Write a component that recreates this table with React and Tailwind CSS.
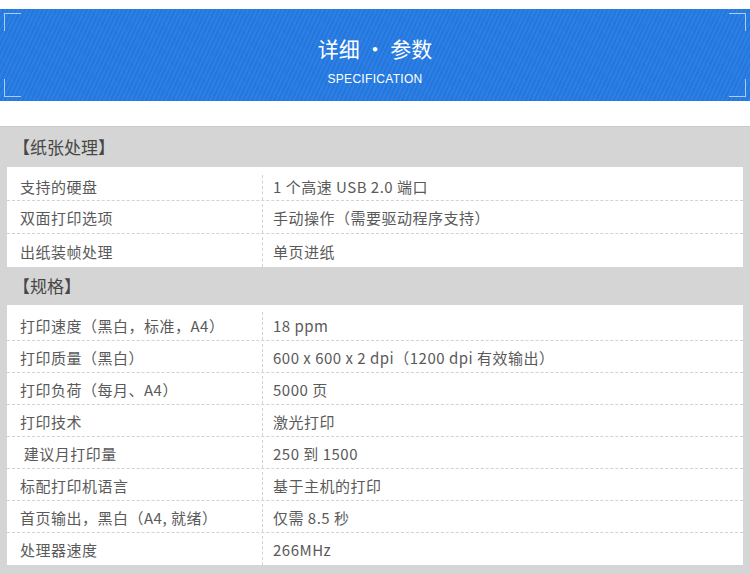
const paper = [
  ["支持的硬盘", "1 个高速 USB 2.0 端口"],
  ["双面打印选项", "手动操作（需要驱动程序支持）"],
  ["出纸装帧处理", "单页进纸"],
];

const spec = [
  ["打印速度（黑白，标准，A4）", "18 ppm"],
  ["打印质量（黑白）", "600 x 600 x 2 dpi（1200 dpi 有效输出）"],
  ["打印负荷（每月、A4）", "5000 页"],
  ["打印技术", "激光打印"],
  [" 建议月打印量", "250 到 1500"],
  ["标配打印机语言", "基于主机的打印"],
  ["首页输出，黑白（A4, 就绪）", "仅需 8.5 秒"],
  ["处理器速度", "266MHz"],
];

const Corner = ({ className }) => (
  <div className={`absolute w-[17px] h-[18px] border-[#a9cdf5] ${className}`} />
);

const SpecTable = ({ rows, first, rest }) => (
  <div className="mx-[7px] bg-white">
    {rows.map(([name, value], i) => (
      <div
        key={i}
        className={`flex ${i === 0 ? first : rest} ${
          i < rows.length - 1 ? "border-b border-dashed border-[#d2d2d2]" : ""
        }`}
      >
        <div className="w-[255px] pl-[13px] flex items-center whitespace-pre">{name}</div>
        <div className="flex-1 pl-[10px] flex items-center border-l border-dashed border-[#d2d2d2]">
          {value}
        </div>
      </div>
    ))}
  </div>
);

export default function App() {
  return (
    <div className="w-[750px] h-[574px] overflow-hidden bg-white font-['Noto_Sans_CJK_SC','Noto_Sans',sans-serif]">
      <div className="pt-[9px]">
        <div className="relative h-[92px] bg-[repeating-linear-gradient(115deg,#2c7fe3_0px,#2c7fe3_2px,#2577dd_2px,#2577dd_4px)] flex flex-col items-center text-white">
          <Corner className="left-[4px] top-[4px] border-l-[1.5px] border-t-[1.5px]" />
          <Corner className="left-[4px] bottom-[4px] border-l-[1.5px] border-b-[1.5px]" />
          <Corner className="right-[4px] top-[4px] border-r-[1.5px] border-t-[1.5px]" />
          <Corner className="right-[4px] bottom-[4px] border-r-[1.5px] border-b-[1.5px]" />
          <div className="mt-[25px] text-[21px] leading-[28px]">详细 · 参数</div>
          <div className="mt-[10px] text-[12px] leading-[14px] tracking-[0.3px] font-['Liberation_Sans',sans-serif]">
            SPECIFICATION
          </div>
        </div>
      </div>

      <div className="mt-[25px] h-[500px] bg-[#d5d5d5] text-[15px] tracking-[0.5px] text-[#5a5a5a] border-t border-[#cacaca]">
        <div className="h-[40px] pl-[13px] flex items-center text-[17px] tracking-normal text-[#474747]">【纸张处理】</div>
        <SpecTable rows={paper} first="h-[34px] pt-[8px]" rest="h-[33px] pt-[3px]" />
        <div className="h-[38px] pl-[13px] flex items-center text-[17px] tracking-normal text-[#474747]">【规格】</div>
        <SpecTable rows={spec} first="h-[36px] pt-[7px]" rest="h-[32px] pt-[3px]" />
      </div>
    </div>
  );
}
